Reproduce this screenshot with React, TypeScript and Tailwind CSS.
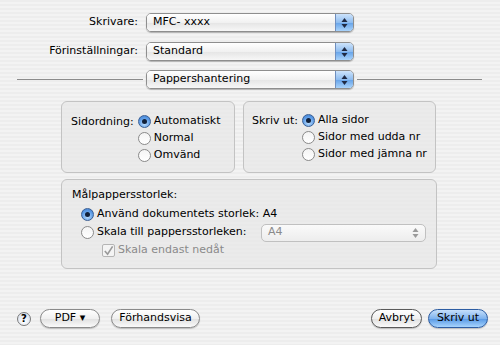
import React from 'react';

const font = { fontFamily: '"DejaVu Sans", "Liberation Sans", sans-serif' };

const Arrows = ({ dim }: { dim?: boolean }) => (
  <svg width="7" height="12" viewBox="0 0 7 12">
    <path d="M3.5 1 L6.5 5 L0.5 5 Z" fill={dim ? '#9a9a9a' : '#1f2a44'} />
    <path d="M3.5 11 L6.5 7 L0.5 7 Z" fill={dim ? '#9a9a9a' : '#1f2a44'} />
  </svg>
);

const Popup = ({ label, className = '' }: { label: string; className?: string }) => (
  <div
    className={`flex h-[19px] w-[208px] items-stretch overflow-hidden rounded-[5px] border border-[#8e8e8e] shadow-[0_1px_1px_rgba(0,0,0,0.25)] ${className}`}
  >
    <div className="flex flex-1 items-center whitespace-nowrap bg-[linear-gradient(#ffffff,#f1f1f1_50%,#e6e6e6_55%,#f7f7f7)] pl-[6px] text-black">
      {label}
    </div>
    <div className="flex w-[18px] items-center justify-center border-l border-[#6f8fbf] bg-[linear-gradient(#cde3fb,#8fbdf0_50%,#6aa6ea_55%,#a9d3fb)]">
      <Arrows />
    </div>
  </div>
);

const Radio = ({ on, label }: { on?: boolean; label: string }) => (
  <div className="flex h-[17px] items-center gap-[3px] whitespace-nowrap text-black">
    <span
      className={`flex h-[13px] w-[13px] shrink-0 items-center justify-center rounded-full border ${
        on
          ? 'border-[#3a5f94] bg-[radial-gradient(circle_at_50%_70%,#bfe0ff,#5a9ae6_60%,#3f7ccc)]'
          : 'border-[#8a8a8a] bg-[linear-gradient(#f4f4f4,#ffffff)]'
      }`}
    >
      {on && <span className="h-[5px] w-[5px] rounded-full bg-[#10203a]" />}
    </span>
    <span>{label}</span>
  </div>
);

const Button = ({ children, className = '', blue }: { children: React.ReactNode; className?: string; blue?: boolean }) => (
  <div
    className={`flex h-[19px] items-center justify-center whitespace-nowrap rounded-full border ${
      blue
        ? 'border-[#2d5da3] bg-[linear-gradient(#c6e0fb,#7fb3ee_50%,#5c9ce6_55%,#a7d4fd)] text-black'
        : 'border-[#8a8a8a] bg-[linear-gradient(#ffffff,#f0f0f0_50%,#e2e2e2_55%,#fafafa)] text-black'
    } shadow-[0_1px_1px_rgba(0,0,0,0.2)] ${className}`}
  >
    {children}
  </div>
);

export default function App() {
  return (
    <div
      style={font}
      className="h-[345px] w-[500px] overflow-hidden bg-[repeating-linear-gradient(#ededed_0px,#ededed_2px,#f3f3f3_2px,#f3f3f3_4px)] text-[11px] text-black"
    >
      <div className="flex items-center pt-[13px]">
        <div className="w-[139px] whitespace-nowrap pr-[1px] text-right">Skrivare:</div>
        <Popup label="MFC- xxxx" className="ml-[7px]" />
      </div>
      <div className="mt-[10px] flex items-center">
        <div className="w-[139px] whitespace-nowrap pr-[1px] text-right">Förinställningar:</div>
        <Popup label="Standard" className="ml-[7px]" />
      </div>
      <div className="mt-[9px] flex items-center">
        <div className="ml-[17px] h-px w-[126px] bg-[#8c8c8c]" />
        <Popup label="Pappershantering" className="ml-[3px]" />
        <div className="ml-[3px] h-px w-[125px] bg-[#8c8c8c]" />
      </div>

      <div className="ml-[61px] mt-[12px] flex gap-[8px]">
        <div className="h-[72px] w-[174px] rounded-[6px] border border-[#c3c3c3] bg-[#e7e7e7]/70 pl-[9px] pt-[11px]">
          <div className="flex">
            <div className="mr-[4px] h-[17px] whitespace-nowrap leading-[17px]">Sidordning:</div>
            <div className="flex flex-col">
              <Radio on label="Automatiskt" />
              <Radio label="Normal" />
              <Radio label="Omvänd" />
            </div>
          </div>
        </div>
        <div className="h-[72px] w-[193px] rounded-[6px] border border-[#c3c3c3] bg-[#e7e7e7]/70 pl-[8px] pt-[10px]">
          <div className="flex">
            <div className="mr-[4px] h-[17px] whitespace-nowrap leading-[17px]">Skriv ut:</div>
            <div className="flex flex-col">
              <Radio on label="Alla sidor" />
              <Radio label="Sidor med udda nr" />
              <Radio label="Sidor med jämna nr" />
            </div>
          </div>
        </div>
      </div>

      <div className="ml-[61px] mt-[6px] h-[90px] w-[376px] rounded-[6px] border border-[#c3c3c3] bg-[#e7e7e7]/70 pl-[10px] pt-[6px]">
        <div className="h-[17px] whitespace-nowrap leading-[17px]">Målpappersstorlek:</div>
        <div className="ml-[9px] mt-[3px] flex flex-col">
          <Radio on label="Använd dokumentets storlek: A4" />
          <div className="flex h-[19px] items-center">
            <div className="w-[180px]">
              <Radio label="Skala till pappersstorleken:" />
            </div>
            <div className="flex h-[18px] w-[165px] items-center justify-between rounded-[5px] border border-[#c0c0c0] bg-[linear-gradient(#fafafa,#ededed)] px-[6px] text-[#8a8a8a]">
              <span>A4</span>
              <Arrows dim />
            </div>
          </div>
          <div className="ml-[21px] flex h-[17px] items-center gap-[3px] whitespace-nowrap text-[#8a8a8a]">
            <span className="flex h-[13px] w-[13px] items-center justify-center rounded-[2px] border border-[#b5b5b5] bg-[#f4f4f4]">
              <svg width="12" height="12" viewBox="0 0 12 12">
                <path d="M2 6 L5 9.5 L10.5 1" fill="none" stroke="#9a9a9a" strokeWidth="1.8" />
              </svg>
            </span>
            <span>Skala endast nedåt</span>
          </div>
        </div>
      </div>

      <div className="mt-[40px] flex items-center">
        <div className="ml-[17px] flex h-[14px] w-[14px] items-center justify-center rounded-full border border-[#7a7a7a] bg-[radial-gradient(circle_at_50%_70%,#ffffff,#cfd8e8)] text-[10px] font-bold">
          ?
        </div>
        <Button className="ml-[9px] w-[60px]">PDF ▾</Button>
        <Button className="ml-[11px] w-[89px]">Förhandsvisa</Button>
        <Button className="ml-[171px] w-[51px] !border-[#5a5a5a]">Avbryt</Button>
        <Button blue className="ml-[6px] w-[60px]">Skriv ut</Button>
      </div>
    </div>
  );
}
